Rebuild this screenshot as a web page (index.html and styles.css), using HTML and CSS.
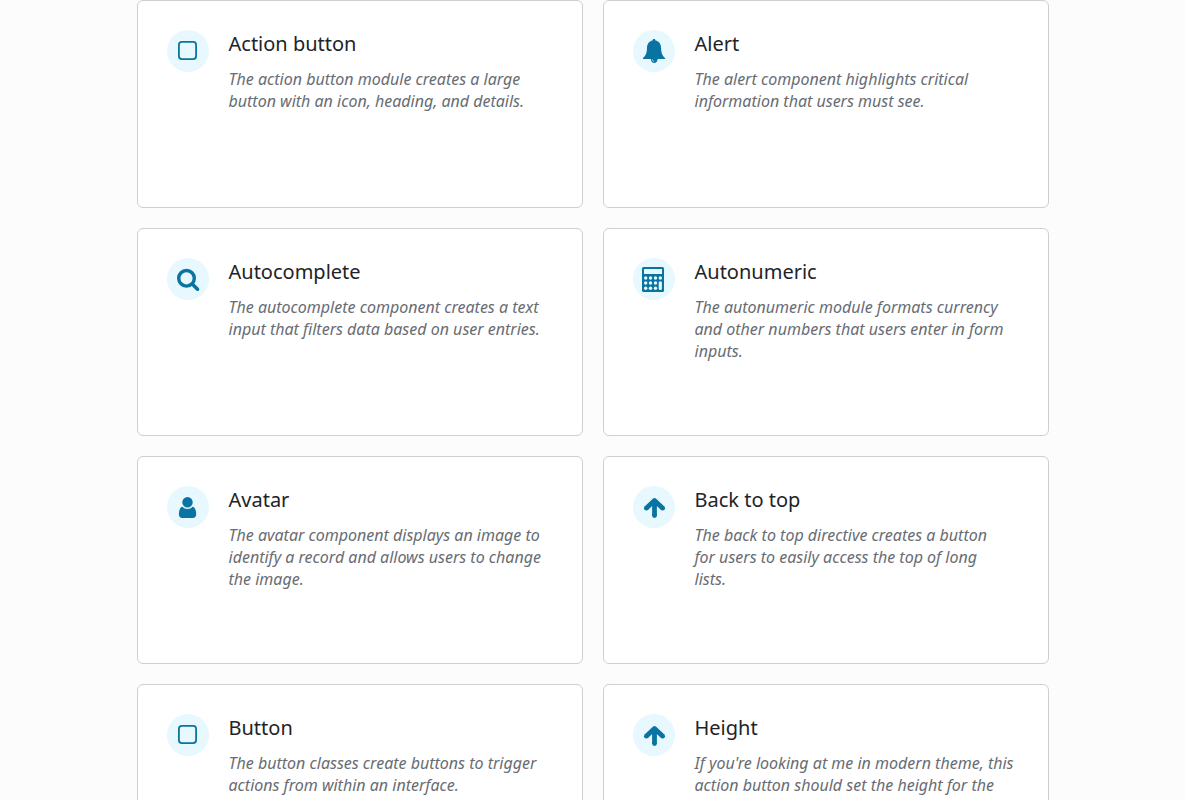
FILE: index.html
```
<!DOCTYPE html>
<html lang="en">
<head>
<meta charset="utf-8">
<meta name="viewport" content="width=device-width, initial-scale=1">
<title>Components</title>
<link rel="stylesheet" href="styles.css">
</head>
<body>
<svg class="sprite" aria-hidden="true">
  <symbol id="square" viewBox="0 0 42 42"><rect x="11.9" y="11.9" width="17.2" height="17.2" rx="3" fill="none" stroke="currentColor" stroke-width="1.8"/></symbol>
  <symbol id="bell" viewBox="0 0 42 42"><path fill="currentColor" d="M21 9c1 0 1.500.7 1.400 1.600 3.700.7 5.600 3.400 5.700 7.400.1 5.200 1.500 7.900 4 10v1h-8.200a3 3 0 0 1-5.800 0H10v-1c2.500-2.100 3.900-4.800 4-10 .1-4 2-6.700 5.600-7.400C19.500 9.700 20 9 21 9z"/><path fill="currentColor" d="M17.800 28.800h6.800c0 2.400-1.300 4.200-3.400 4.200s-3.400-1.800-3.400-4.200z"/><path d="M19.300 29.300c.1 1.200.8 2 1.900 2.200" fill="none" stroke="#e7f8ff" stroke-width=".7"/></symbol>
  <symbol id="search" viewBox="0 0 42 42"><circle cx="19.500" cy="20.300" r="7.800" fill="none" stroke="currentColor" stroke-width="3.400"/><path d="m25.500 26.300 5 4.900" stroke="currentColor" stroke-width="3.600" stroke-linecap="round"/></symbol>
  <symbol id="calculator" viewBox="0 0 42 42"><rect x="9" y="9" width="22" height="25" rx="1.500" fill="currentColor"/><g fill="#e7f8ff"><path d="M11 11h18v5H11z"/><circle cx="12.700" cy="20" r="1.700"/><circle cx="17.500" cy="20" r="1.700"/><circle cx="22.500" cy="20" r="1.700"/><circle cx="27.300" cy="20" r="1.700"/><circle cx="12.700" cy="25" r="1.700"/><circle cx="17.500" cy="25" r="1.700"/><circle cx="22.500" cy="25" r="1.700"/><circle cx="12.700" cy="30.300" r="1.700"/><circle cx="17.500" cy="30.300" r="1.700"/><circle cx="22.500" cy="30.300" r="1.700"/><rect x="25.700" y="23.300" width="3.200" height="8.700" rx="1.500"/></g></symbol>
  <symbol id="user" viewBox="0 0 42 42"><g fill="currentColor"><circle cx="20.500" cy="16.200" r="5.200"/><path d="M15.500 20.800c1.300 1.400 3 2.200 5 2.200s3.700-.8 5-2.200c2.500.4 3.700 3.600 3.700 7.400 0 2.400-1.300 3.800-3.300 3.800H15.200c-2 0-3.300-1.400-3.300-3.800 0-3.800 1.100-7 3.600-7.400z"/></g></symbol>
  <symbol id="arrow" viewBox="0 0 42 42"><path d="M21.500 30V15M13 22.500l8.500-8 8.500 8" fill="none" stroke="currentColor" stroke-width="4.800" stroke-linejoin="round"/><circle cx="13.300" cy="22.200" r="2.300" fill="currentColor"/><circle cx="29.700" cy="22.200" r="2.300" fill="currentColor"/><circle cx="21.500" cy="29.600" r="2.400" fill="currentColor"/></symbol>
</svg>
<main class="actions">
  <button type="button" class="action"><svg class="icon" aria-hidden="true"><use href="#square"/></svg><span class="text"><span class="heading">Action button</span><span class="details">The action button module creates a large button with an icon, heading, and details.</span></span></button>
  <button type="button" class="action"><svg class="icon" aria-hidden="true"><use href="#bell"/></svg><span class="text"><span class="heading">Alert</span><span class="details">The alert component highlights critical information that users must see.</span></span></button>
  <button type="button" class="action"><svg class="icon" aria-hidden="true"><use href="#search"/></svg><span class="text"><span class="heading">Autocomplete</span><span class="details">The autocomplete component creates a text input that filters data based on user entries.</span></span></button>
  <button type="button" class="action"><svg class="icon" aria-hidden="true"><use href="#calculator"/></svg><span class="text"><span class="heading">Autonumeric</span><span class="details">The autonumeric module formats currency and other numbers that users enter in form inputs.</span></span></button>
  <button type="button" class="action"><svg class="icon" aria-hidden="true"><use href="#user"/></svg><span class="text"><span class="heading">Avatar</span><span class="details">The avatar component displays an image to identify a record and allows users to change the image.</span></span></button>
  <button type="button" class="action"><svg class="icon" aria-hidden="true"><use href="#arrow"/></svg><span class="text"><span class="heading">Back to top</span><span class="details">The back to top directive creates a button for&nbsp;users to easily access the top of long <br>lists.</span></span></button>
  <button type="button" class="action"><svg class="icon" aria-hidden="true"><use href="#square"/></svg><span class="text"><span class="heading">Button</span><span class="details">The button classes create buttons to trigger actions from within an interface.</span></span></button>
  <button type="button" class="action"><svg class="icon" aria-hidden="true"><use href="#arrow"/></svg><span class="text"><span class="heading">Height</span><span class="details">If you're looking at me in modern theme, this action button should set the height for the</span></span></button>
</main>
</body>
</html>
```
FILE: styles.css
```
* { box-sizing: border-box; }

body {
  margin: 0;
  background: #fcfcfc;
  font-family: "Noto Sans", "Open Sans", sans-serif;
}

.sprite {
  display: block;
  width: 0;
  height: 0;
}

.actions {
  display: grid;
  grid-template-columns: repeat(2, minmax(0, 1fr));
  grid-auto-rows: minmax(208px, auto);
  gap: 20px;
  max-width: 912px;
  margin: 0 auto;
}

.action {
  display: flex;
  align-items: flex-start;
  gap: 20px;
  padding: 29px;
  border: 1px solid #cdcfd2;
  border-radius: 6px;
  background: #fff;
  font-family: inherit;
  text-align: left;
  cursor: pointer;
}

.icon {
  flex: none;
  width: 42px;
  height: 42px;
  border-radius: 50%;
  background: #e7f8ff;
  color: #0974a1;
}

.text {
  flex: 1;
  min-width: 0;
}

.heading {
  display: block;
  margin-bottom: 10px;
  font-size: 20px;
  line-height: 28px;
  color: #212327;
}

.details {
  display: block;
  font-size: 16px;
  font-style: italic;
  line-height: 22px;
  color: #686c73;
}

@media (max-width: 640px) {
  .actions { grid-template-columns: minmax(0, 1fr); }
}
```
